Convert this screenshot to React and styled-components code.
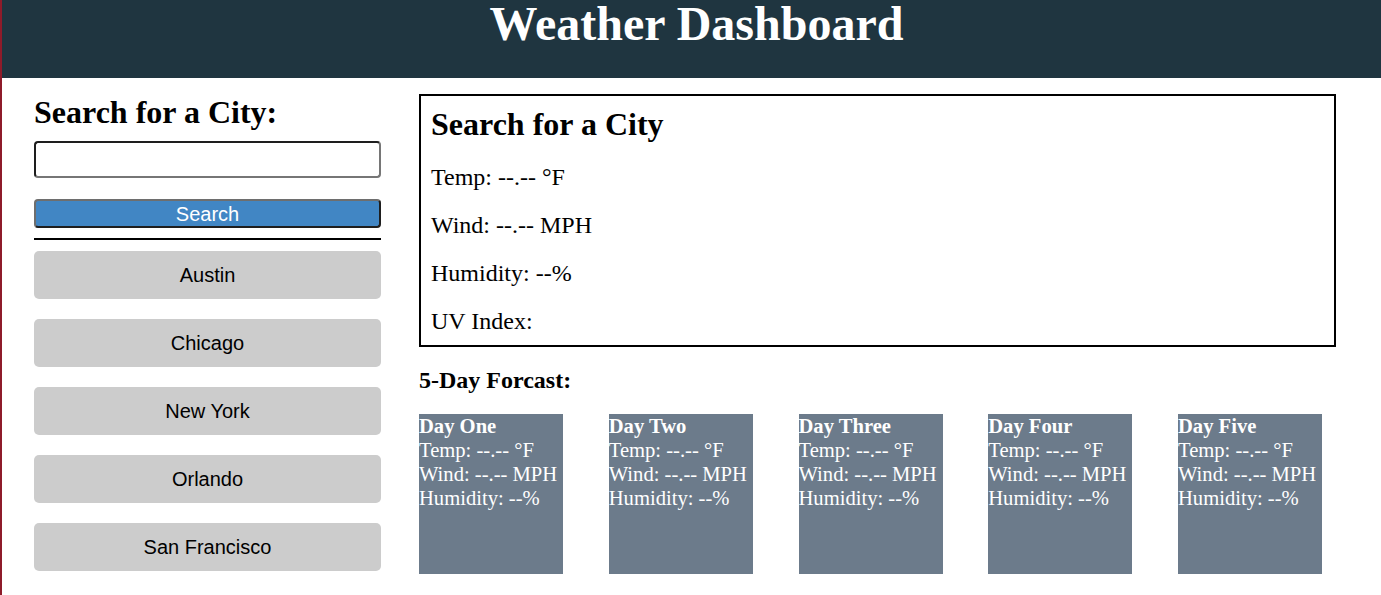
import React from "react";
import styled, { createGlobalStyle } from "styled-components";

const GlobalStyle = createGlobalStyle`
  html, body {
    margin: 0;
    padding: 0;
    background: #ffffff;
  }
  body {
    font-family: "Liberation Serif", "Times New Roman", serif;
    color: #000;
  }
`;

const Page = styled.div`
  min-height: 595px;
  border-left: 2px solid #8e1b2a;
  box-sizing: border-box;
`;

const Header = styled.header`
  height: 78px;
  background: #1f3540;
  display: flex;
  justify-content: center;
`;

const Title = styled.h1`
  margin: 0;
  color: #ffffff;
  font-size: 48px;
  line-height: 48px;
  font-weight: bold;
  padding-left: 10px;
`;

const Main = styled.main`
  display: flex;
  align-items: flex-start;
  gap: 38px;
  padding: 16px 0 0 32px;
`;

const Aside = styled.aside`
  width: 347px;
  display: flex;
  flex-direction: column;
`;

const SideHeading = styled.h2`
  margin: 0;
  font-size: 32px;
  line-height: 37px;
  font-weight: bold;
`;

const SearchInput = styled.input`
  margin-top: 10px;
  height: 37px;
  box-sizing: border-box;
  width: 100%;
  border: 2px solid;
  border-color: #1e1e1e #767676 #767676 #1e1e1e;
  border-radius: 4px;
  font-size: 18px;
  padding: 2px 6px;
  outline: none;
`;

const SearchButton = styled.button`
  margin-top: 21px;
  height: 29px;
  width: 100%;
  box-sizing: border-box;
  background: #4186c4;
  color: #ffffff;
  font-family: "Liberation Sans", Arial, sans-serif;
  font-size: 20px;
  line-height: 24px;
  padding: 0;
  border: 2px solid;
  border-color: #6e6e6e #1e1e1e #1e1e1e #6e6e6e;
  border-radius: 4px;
`;

const Divider = styled.hr`
  margin: 10px 0 0;
  border: none;
  height: 2px;
  background: #000;
`;

const CityList = styled.div`
  margin-top: 11px;
  display: flex;
  flex-direction: column;
  gap: 20px;
`;

const CityButton = styled.button`
  height: 48px;
  width: 100%;
  border: none;
  border-radius: 5px;
  background: #cccccc;
  color: #000;
  font-family: "Liberation Sans", Arial, sans-serif;
  font-size: 20px;
  padding: 0;
`;

const Content = styled.section`
  width: 917px;
`;

const CurrentBox = styled.div`
  border: 2px solid #000;
  padding: 10px 10px;
  display: flex;
  flex-direction: column;
  gap: 20px;
`;

const CurrentHeading = styled.h2`
  margin: 0;
  font-size: 32px;
  line-height: 37px;
  font-weight: bold;
`;

const Stat = styled.p`
  margin: 0;
  font-size: 24px;
  line-height: 28px;
`;

const ForecastHeading = styled.h3`
  margin: 20px 0;
  font-size: 24px;
  line-height: 27px;
  font-weight: bold;
`;

const CardRow = styled.div`
  display: flex;
  gap: 45.75px;
`;

const Card = styled.div`
  width: 144px;
  height: 160px;
  flex: none;
  background: #6c7b8b;
  color: #ffffff;
  font-size: 20.6px;
  line-height: 24px;
  white-space: nowrap;
`;

const CardTitle = styled.div`
  font-weight: bold;
`;

const CardLine = styled.div``;

const cities = ["Austin", "Chicago", "New York", "Orlando", "San Francisco"];
const days = ["Day One", "Day Two", "Day Three", "Day Four", "Day Five"];

export default function App() {
  return (
    <Page>
      <GlobalStyle />
      <Header>
        <Title>Weather Dashboard</Title>
      </Header>
      <Main>
        <Aside>
          <SideHeading>Search for a City:</SideHeading>
          <SearchInput type="text" />
          <SearchButton>Search</SearchButton>
          <Divider />
          <CityList>
            {cities.map((c) => (
              <CityButton key={c}>{c}</CityButton>
            ))}
          </CityList>
        </Aside>
        <Content>
          <CurrentBox>
            <CurrentHeading>Search for a City</CurrentHeading>
            <Stat>Temp: --.-- °F</Stat>
            <Stat>Wind: --.-- MPH</Stat>
            <Stat>Humidity: --%</Stat>
            <Stat>UV Index:</Stat>
          </CurrentBox>
          <ForecastHeading>5-Day Forcast:</ForecastHeading>
          <CardRow>
            {days.map((d) => (
              <Card key={d}>
                <CardTitle>{d}</CardTitle>
                <CardLine>Temp: --.-- °F</CardLine>
                <CardLine>Wind: --.-- MPH</CardLine>
                <CardLine>Humidity: --%</CardLine>
              </Card>
            ))}
          </CardRow>
        </Content>
      </Main>
    </Page>
  );
}
